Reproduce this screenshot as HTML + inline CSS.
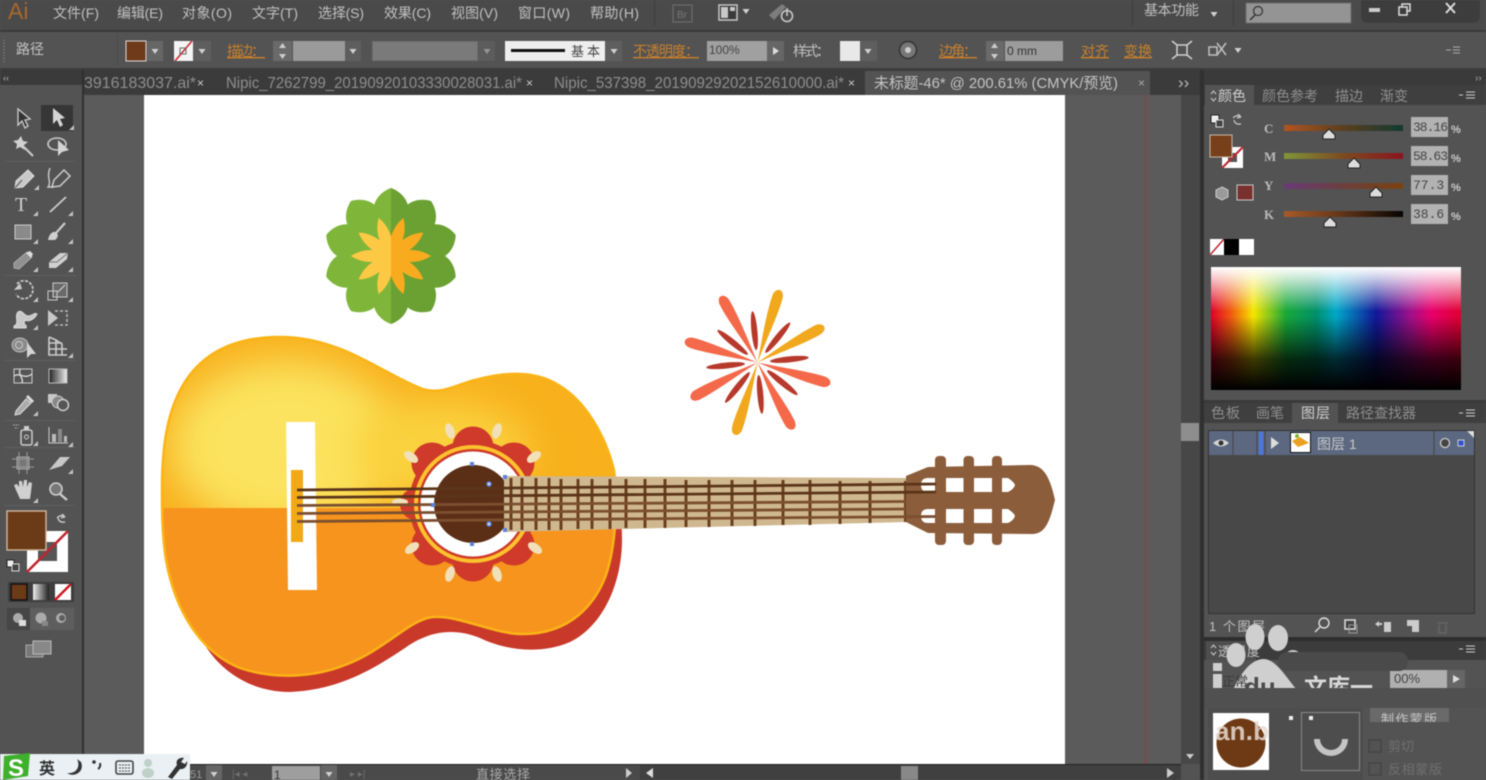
<!DOCTYPE html>
<html><head><meta charset="utf-8"><title>Illustrator</title>
<style>
html,body{margin:0;padding:0;background:#535353;width:1486px;height:780px;overflow:hidden}
svg{display:block;filter:blur(.5px)}
text{font-family:"Liberation Sans","Noto Sans CJK SC",sans-serif;fill:#bcbcbc}
.m{font-size:14px;fill:#c0c0c0}
.o{font-size:14px;fill:#c8802c;text-decoration:underline}
.t{font-size:14px;fill:#b4b4b4}
.p{font-size:14px;fill:#8e8e8e}
.q{font-size:16px;fill:#8e8e8e}
.i{stroke:#cdcdcd;stroke-width:1.5;fill:none}
.f{fill:#cdcdcd}
</style></head><body>
<svg xmlns="http://www.w3.org/2000/svg" width="1486" height="780" viewBox="0 0 1486 780">
<defs>
<filter id="b30" x="-60%" y="-60%" width="220%" height="220%"><feGaussianBlur stdDeviation="20"/></filter>
<clipPath id="bodyc"><path d="M162,490 C162,430 170,337 280,337 C340,337 380,372 420,388 C440,396 455,385 475,380 C500,373 530,370 553,382 C585,398 605,435 614,470 C618,500 616,545 606,575 C595,605 570,633 525,634 C495,635 460,615 433,617 C410,619 385,650 345,665 C315,677 275,680 240,668 C200,652 175,610 166,560 C162,535 162,510 162,490 Z"/></clipPath>
<clipPath id="art"><rect x="144" y="95" width="921" height="669"/></clipPath>
<clipPath id="fl"><rect x="320" y="180" width="71" height="150"/></clipPath>
<clipPath id="fr"><rect x="391" y="180" width="71" height="150"/></clipPath>
<clipPath id="hole"><rect x="420" y="460" width="84" height="90"/></clipPath>
<clipPath id="wm"><rect x="1200" y="620" width="290" height="68"/></clipPath>
<clipPath id="btn"><rect x="1370" y="708" width="80" height="14"/></clipPath>
<clipPath id="smile"><rect x="1310" y="733" width="50" height="30"/></clipPath>
<linearGradient id="hue" x1="0" x2="1" y1="0" y2="0">
<stop offset="0" stop-color="#e0002a"/><stop offset=".08" stop-color="#f05a10"/><stop offset=".17" stop-color="#f5e600"/><stop offset=".3" stop-color="#18a838"/><stop offset=".42" stop-color="#00906a"/><stop offset=".5" stop-color="#00a8c8"/><stop offset=".66" stop-color="#10189a"/><stop offset=".8" stop-color="#a0108a"/><stop offset=".88" stop-color="#e8006c"/><stop offset="1" stop-color="#e00030"/>
</linearGradient>
<linearGradient id="vw" x1="0" x2="0" y1="0" y2="1">
<stop offset="0" stop-color="#fff"/><stop offset=".08" stop-color="#fff" stop-opacity=".8"/><stop offset=".36" stop-color="#fff" stop-opacity="0"/><stop offset=".4" stop-color="#000" stop-opacity="0"/><stop offset=".75" stop-color="#000" stop-opacity=".75"/><stop offset="1" stop-color="#000"/>
</linearGradient>
<linearGradient id="c1" x1="0" x2="1" y1="0" y2="0"><stop offset="0" stop-color="#b5541f"/><stop offset=".5" stop-color="#5a3f1e"/><stop offset="1" stop-color="#123a30"/></linearGradient>
<linearGradient id="c2" x1="0" x2="1" y1="0" y2="0"><stop offset="0" stop-color="#82963a"/><stop offset=".5" stop-color="#7c4a1e"/><stop offset="1" stop-color="#8c1420"/></linearGradient>
<linearGradient id="c3" x1="0" x2="1" y1="0" y2="0"><stop offset="0" stop-color="#6a3a78"/><stop offset=".5" stop-color="#6c3f3c"/><stop offset="1" stop-color="#7a4210"/></linearGradient>
<linearGradient id="c4" x1="0" x2="1" y1="0" y2="0"><stop offset="0" stop-color="#a85a28"/><stop offset=".5" stop-color="#603418"/><stop offset="1" stop-color="#060402"/></linearGradient>
<linearGradient id="gt" x1="0" x2="1" y1="0" y2="0"><stop offset="0" stop-color="#222"/><stop offset="1" stop-color="#eee"/></linearGradient>
<path id="lp" d="M0,0 C-10,-15 -20,-35 -17,-50 C-15,-60 -6,-66 0,-68 C6,-66 15,-60 17,-50 C20,-35 10,-15 0,0 Z"/>
<path id="sp" d="M0,0 C-8,-12 -8,-28 0,-40 C8,-28 8,-12 0,0 Z"/>
<path id="big" d="M0,0 C-2,-25 -6,-52 -5.500,-68 C-5,-78 3,-78 5,-70 C6,-52 2.500,-25 0,0 Z"/>
<ellipse id="sm" cx="0" cy="-32" rx="3" ry="19.5"/>
<ellipse id="drop" cx="0" cy="0" rx="4.500" ry="8"/>
<path id="tri" d="M0,0 L5,0 L5,-5 Z" fill="#c4c4c4"/>
<path id="dn" d="M-3.5,-2 L3.5,-2 L0,3 Z" fill="#d0d0d0"/>
<path id="thumb" d="M-6,5 L-6,1 L0,-5 L6,1 L6,5 Z" fill="#ddd" stroke="#222" stroke-width="1"/>
</defs>

<rect width="1486" height="780" fill="#535353"/>
<!-- top menu -->
<rect width="1486" height="30" fill="#4a4a4a"/>
<rect y="30" width="1486" height="2" fill="#3a3a3a"/>
<text x="8" y="19" style="font-size:23px;fill:#a9682e">Ai</text>
<text class="m" x="53" y="18" textLength="46">文件(F)</text>
<text class="m" x="117" y="18" textLength="46">编辑(E)</text>
<text class="m" x="182" y="18" textLength="50">对象(O)</text>
<text class="m" x="252" y="18" textLength="46">文字(T)</text>
<text class="m" x="318" y="18" textLength="46">选择(S)</text>
<text class="m" x="384" y="18" textLength="47">效果(C)</text>
<text class="m" x="451" y="18" textLength="47">视图(V)</text>
<text class="m" x="518" y="18" textLength="52">窗口(W)</text>
<text class="m" x="590" y="18" textLength="49">帮助(H)</text>
<rect x="654" y="0" width="1" height="26" fill="#3c3c3c"/>
<rect x="673" y="5" width="19" height="17" fill="none" stroke="#707070"/>
<text x="677" y="18" style="font-size:10px;fill:#777">Br</text>
<rect x="719" y="5" width="18" height="15" fill="#3a3a3a" stroke="#c8c8c8" stroke-width="1.5"/>
<rect x="721" y="7" width="7" height="11" fill="#c8c8c8"/><rect x="730" y="7" width="5" height="4" fill="#c8c8c8"/>
<use href="#dn" x="746" y="11"/>
<path d="M769,15 L782,4 L786,7 L774,20 Z" fill="#7c7c7c"/>
<circle cx="787" cy="16" r="5.5" fill="none" stroke="#c8c8c8" stroke-width="1.6"/><path d="M787,8 v8" stroke="#c8c8c8" stroke-width="1.6"/>
<rect x="1132" y="0" width="1" height="26" fill="#3c3c3c"/>
<text class="m" x="1144" y="15" textLength="55">基本功能</text>
<use href="#dn" x="1214" y="14"/>
<rect x="1233" y="0" width="1" height="26" fill="#3c3c3c"/>
<rect x="1246" y="3" width="105" height="20" fill="#949494" stroke="#6a6a6a"/>
<circle cx="1258" cy="11" r="4.5" fill="none" stroke="#333" stroke-width="1.2"/><path d="M1255,15 L1250,20" stroke="#333" stroke-width="1.5"/>
<path d="M1361,0 H1480 V15 q0,8 -7,8 H1368 q-7,0 -7,-8 Z" fill="#3d3d3d"/>
<rect x="1369" y="8" width="11" height="4" fill="#ccc"/>
<rect x="1402" y="4" width="8" height="7" fill="none" stroke="#ddd" stroke-width="1.5"/><rect x="1399" y="7" width="8" height="8" fill="#3d3d3d" stroke="#ddd" stroke-width="1.5"/>
<path d="M1446,3 L1455,13 M1455,3 L1446,13" stroke="#ddd" stroke-width="2"/>

<!-- control bar -->
<rect y="32" width="1486" height="37" fill="#535353"/>
<rect y="68" width="1486" height="2" fill="#3c3c3c"/>
<path d="M4,40 v22" stroke="#888" stroke-width="1.5" stroke-dasharray="1 2"/>
<text x="16" y="54" style="font-size:14px;fill:#c4c4c4">路径</text>
<rect x="117" y="34" width="1" height="32" fill="#4a4a4a"/>
<rect x="126" y="41" width="20" height="20" fill="#6e3a1a" stroke="#ddd"/>
<rect x="147" y="41" width="16" height="20" fill="#666"/><use href="#dn" x="155" y="51"/>
<rect x="174" y="41" width="19" height="20" fill="#f4f4f4"/><path d="M175,61 L192,41" stroke="#d02a30" stroke-width="1.6"/><rect x="180" y="48" width="6" height="6" fill="none" stroke="#666"/>
<rect x="193" y="41" width="18" height="20" fill="#5e5e5e"/><use href="#dn" x="202" y="51"/>
<text class="o" x="227" y="56" textLength="38">描边：</text>
<rect x="273" y="41" width="19" height="20" fill="#6a6a6a"/><path d="M279,48 L286,48 L282.500,43 Z M279,54 L286,54 L282.500,59 Z" fill="#ccc"/>
<rect x="293" y="41" width="52" height="20" fill="#9a9a9a"/>
<rect x="345" y="41" width="16" height="20" fill="#5e5e5e"/><use href="#dn" x="353" y="51"/>
<rect x="372" y="41" width="106" height="20" fill="#7a7a7a" stroke="#5c5c5c"/>
<rect x="478" y="41" width="17" height="20" fill="#5c5c5c"/><use href="#dn" x="487" y="51" opacity=".5"/>
<rect x="505" y="41" width="100" height="20" fill="#eeeeee"/>
<rect x="511" y="49" width="54" height="3" fill="#111"/>
<text x="571" y="56" style="font-size:13px;fill:#444" textLength="29">基本</text>
<rect x="605" y="41" width="17" height="20" fill="#5e5e5e"/><use href="#dn" x="614" y="51"/>
<text class="o" x="633" y="56" textLength="66">不透明度：</text>
<rect x="707" y="41" width="60" height="20" fill="#a0a0a0"/>
<text x="709" y="54" style="font-size:12px;fill:#444">100%</text>
<rect x="767" y="41" width="17" height="20" fill="#666"/><path d="M773,47 L773,55 L779,51 Z" fill="#ddd"/>
<text x="793" y="56" style="font-size:14px;fill:#c4c4c4" textLength="37">样式：</text>
<rect x="840" y="41" width="20" height="20" fill="#e8e8e8"/>
<rect x="860" y="41" width="17" height="20" fill="#5e5e5e"/><use href="#dn" x="868" y="51"/>
<circle cx="908" cy="50" r="8.500" fill="#777" stroke="#333" stroke-width="1.500"/><circle cx="908" cy="50" r="3" fill="#ccc"/>
<text class="o" x="939" y="56" textLength="38">边角：</text>
<rect x="986" y="41" width="18" height="20" fill="#6a6a6a"/><path d="M991,48 L998,48 L994.500,43 Z M991,54 L998,54 L994.500,59 Z" fill="#ccc"/>
<rect x="1005" y="41" width="58" height="20" fill="#9c9c9c"/>
<text x="1007" y="55" style="font-size:12px;fill:#333" textLength="30">0 mm</text>
<text class="o" x="1081" y="56" textLength="28">对齐</text>
<text class="o" x="1124" y="56" textLength="28">变换</text>
<g stroke="#d0d0d0" stroke-width="1.500" fill="none"><rect x="1177" y="45" width="10" height="10"/><path d="M1172,41 L1177,45 M1192,41 L1187,45 M1172,59 L1177,55 M1192,59 L1187,55"/></g>
<g stroke="#c0c0c0" stroke-width="1.500" fill="none"><rect x="1209" y="47" width="8" height="8"/><path d="M1217,43 L1226,55 M1226,43 L1217,55"/></g>
<use href="#dn" x="1238" y="50"/>
<path d="M1446,50 h5 M1453,47 h7 M1453,50 h7 M1453,53 h7" stroke="#aaa"/>

<!-- tabs -->
<rect x="84" y="70" width="1116" height="25" fill="#3b3b3b"/>
<rect x="0" y="70" width="82" height="15" fill="#3a3a3a"/>
<text x="3" y="81" style="font-size:9px;fill:#bbb">‹‹</text>
<text class="q" x="84" y="88" textLength="112" lengthAdjust="spacingAndGlyphs">3916183037.ai*</text>
<text x="197" y="87" style="font-size:12px;fill:#ccc">×</text>
<text class="q" x="226" y="88" textLength="296" lengthAdjust="spacingAndGlyphs">Nipic_7262799_20190920103330028031.ai*</text>
<text x="526" y="87" style="font-size:12px;fill:#ccc">×</text>
<text class="q" x="554" y="88" textLength="290" lengthAdjust="spacingAndGlyphs">Nipic_537398_20190929202152610000.ai*</text>
<text x="848" y="87" style="font-size:12px;fill:#ccc">×</text>
<rect x="865" y="71" width="285" height="24" fill="#535353"/>
<text x="874" y="88" style="font-size:15px;fill:#c4c4c4" textLength="244" lengthAdjust="spacingAndGlyphs">未标题-46* @ 200.61% (CMYK/预览)</text>
<text x="1138" y="87" style="font-size:12px;fill:#aaa">×</text>
<text x="1178" y="88" style="font-size:17px;fill:#bbb">››</text>

<!-- canvas -->
<rect x="84" y="95" width="1097" height="670" fill="#5b5b5b"/>
<rect x="144" y="95" width="921" height="669" fill="#fff"/>
<rect x="1145" y="95" width="1" height="670" fill="#a8323a"/>
<rect x="82" y="70" width="2" height="710" fill="#303030"/>
<rect x="1181" y="95" width="19" height="670" fill="#474747"/>
<rect x="1181" y="423" width="18" height="18" fill="#8e8e8e"/>
<path d="M1186,754 h8 l-4,5 Z" fill="#ccc"/>
<rect x="1200" y="70" width="4" height="710" fill="#303030"/>

<!-- GUITAR -->
<g clip-path="url(#art)">
<path d="M600,445 C612,460 622,500 622,540 C622,580 605,625 570,642 C540,655 505,650 480,638 C455,628 430,630 405,648 C375,668 340,690 290,692 C250,692 220,670 205,645 Z" fill="#c9392a"/>
<g clip-path="url(#bodyc)">
<rect x="155" y="330" width="470" height="350" fill="#f8b01c"/>
<ellipse cx="285" cy="445" rx="115" ry="85" fill="#fbe35f" filter="url(#b30)"/>
<ellipse cx="440" cy="450" rx="90" ry="50" fill="#fad23e" filter="url(#b30)"/>
<rect x="155" y="508" width="470" height="180" fill="#f7941d"/>
</g>
<path d="M162,490 C162,430 170,337 280,337 C340,337 380,372 420,388 C440,396 455,385 475,380 C500,373 530,370 553,382 C585,398 605,435 614,470 C618,500 616,545 606,575 C595,605 570,633 525,634 C495,635 460,615 433,617 C410,619 385,650 345,665 C315,677 275,680 240,668 C200,652 175,610 166,560 C162,535 162,510 162,490 Z" fill="none" stroke="#fbb416" stroke-width="2.500"/>
<!-- bridge -->
<path d="M286,422 L315,422 L317,590 L288,590 Z" fill="#fff"/>
<rect x="291" y="470" width="12" height="72" fill="#f3a917"/>
<!-- rosette -->
<g fill="#cf3a2a" transform="translate(473,504)">
<circle cx="0" cy="0" r="64"/>
<circle cx="0" cy="-57" r="20.500"/><circle cx="41" cy="-41" r="20.500"/><circle cx="57" cy="0" r="20"/><circle cx="41" cy="41" r="20.500"/><circle cx="0" cy="57" r="20.500"/><circle cx="-41" cy="41" r="20.500"/><circle cx="-57" cy="0" r="16"/><circle cx="-41" cy="-41" r="20.500"/>
</g>
<g fill="#f1e0b8">
<use href="#drop" transform="translate(497,431) rotate(18)"/><use href="#drop" transform="translate(534,457) rotate(55)"/>
<use href="#drop" transform="translate(535,548) rotate(125)"/><use href="#drop" transform="translate(497,574) rotate(162)"/>
<use href="#drop" transform="translate(450,574) rotate(198)"/><use href="#drop" transform="translate(412,548) rotate(235)"/>
<use href="#drop" transform="translate(411,457) rotate(305)"/><use href="#drop" transform="translate(450,431) rotate(342)"/>
<ellipse cx="400" cy="502" rx="8" ry="3.500"/>
</g>
<circle cx="473" cy="504" r="59" fill="#fcc32d"/>
<circle cx="473" cy="504" r="55" fill="#cf3a2a"/>
<circle cx="473" cy="504" r="52.500" fill="#fff"/>
<circle cx="473" cy="504" r="39" fill="#5a2f16" clip-path="url(#hole)"/>
<!-- neck -->
<path d="M504,476 L906,478 L906,522 L504,532 Z" fill="#cfb88f"/>
<!-- head -->
<path d="M906,476 L928,467 L1030,465 C1044,465 1050,478 1055,500 C1050,520 1046,534 1032,534 L928,533 L906,522 Z" fill="#8b5d3b"/>
<g fill="#fff">
<path d="M928,478 H936 V492 H928 Q921,492 921,485 Q921,478 928,478 Z"/><rect x="946" y="478" width="18" height="14"/><rect x="973.500" y="478" width="18.500" height="14"/><path d="M1002,478 H1008 Q1014,482 1015,485 Q1014,489 1008,492 H1002 Z"/>
<path d="M928,509 H936 V523 H928 Q921,523 921,516 Q921,509 928,509 Z"/><rect x="946" y="509" width="18" height="14"/><rect x="973.500" y="509" width="18.500" height="14"/><path d="M1002,509 H1008 Q1014,513 1015,516 Q1014,520 1008,523 H1002 Z"/>
</g>
<g fill="#8b5d3b"><rect x="935" y="456" width="11" height="89" rx="4"/><rect x="963.500" y="456" width="10.500" height="89" rx="4"/><rect x="992" y="456" width="10" height="89" rx="4"/></g>
<!-- frets -->
<g stroke="#6b3f22" stroke-width="3">
<path d="M511,478 V530 M522,478 V530 M536,478 V530 M549,478 V530 M561,479 V530 M578,479 V529 M592,479 V529 M610,479 V529 M626,479 V528 M645,479 V528 M665,479 V528 M686,480 V527 M709,480 V527 M732,480 V526 M755,480 V526 M783,480 V525 M810,480 V525 M840,481 V524 M870,481 V523"/>
</g>
<path d="M905,481 V522" stroke="#6b3f22" stroke-width="2"/>
<!-- strings -->
<g fill="none" stroke-width="2.800">
<path d="M297,490 L936,484" stroke="#5b3519"/>
<path d="M297,497.500 L936,492" stroke="#5b3519"/>
<path d="M297,505.500 L906,501.500" stroke="#7b4f2f"/>
<path d="M297,513.500 L906,509" stroke="#7b4f2f"/>
<path d="M297,521.500 L936,516.500" stroke="#7b4f2f"/>
</g>
<!-- anchors -->
<g fill="#5d82dc"><rect x="470" y="462" width="4" height="4"/><rect x="470" y="542" width="4" height="4"/><rect x="431" y="503" width="4" height="4"/><rect x="503" y="475" width="4" height="4"/><rect x="503" y="528" width="4" height="4"/></g>
<g fill="#dfe4ef" stroke="#5d82dc" stroke-width="1.500"><circle cx="489" cy="484" r="2"/><circle cx="489" cy="524" r="2"/></g>

<!-- green flower -->
<g clip-path="url(#fl)"><g fill="#7fb63a" transform="translate(391,256)">
<use href="#lp"/><use href="#lp" transform="rotate(36)"/><use href="#lp" transform="rotate(72)"/><use href="#lp" transform="rotate(108)"/><use href="#lp" transform="rotate(144)"/><use href="#lp" transform="rotate(180)"/><use href="#lp" transform="rotate(216)"/><use href="#lp" transform="rotate(252)"/><use href="#lp" transform="rotate(288)"/><use href="#lp" transform="rotate(324)"/></g>
<g fill="#fdc945" transform="translate(391,256)"><circle r="9"/><use href="#sp" transform="rotate(18)"/><use href="#sp" transform="rotate(54)"/><use href="#sp" transform="rotate(90)"/><use href="#sp" transform="rotate(126)"/><use href="#sp" transform="rotate(162)"/><use href="#sp" transform="rotate(198)"/><use href="#sp" transform="rotate(234)"/><use href="#sp" transform="rotate(270)"/><use href="#sp" transform="rotate(306)"/><use href="#sp" transform="rotate(342)"/></g></g>
<g clip-path="url(#fr)"><g fill="#6ba032" transform="translate(391,256)">
<use href="#lp"/><use href="#lp" transform="rotate(36)"/><use href="#lp" transform="rotate(72)"/><use href="#lp" transform="rotate(108)"/><use href="#lp" transform="rotate(144)"/><use href="#lp" transform="rotate(180)"/><use href="#lp" transform="rotate(216)"/><use href="#lp" transform="rotate(252)"/><use href="#lp" transform="rotate(288)"/><use href="#lp" transform="rotate(324)"/></g>
<g fill="#f9ab1f" transform="translate(391,256)"><circle r="9"/><use href="#sp" transform="rotate(18)"/><use href="#sp" transform="rotate(54)"/><use href="#sp" transform="rotate(90)"/><use href="#sp" transform="rotate(126)"/><use href="#sp" transform="rotate(162)"/><use href="#sp" transform="rotate(198)"/><use href="#sp" transform="rotate(234)"/><use href="#sp" transform="rotate(270)"/><use href="#sp" transform="rotate(306)"/><use href="#sp" transform="rotate(342)"/></g></g>

<!-- burst -->
<g transform="translate(757.500,362.500)">
<g fill="#f4694a"><use href="#big" transform="rotate(-28.600)"/><use href="#big" transform="rotate(-73.200)"/><use href="#big" transform="rotate(-118.100)"/><use href="#big" transform="rotate(152)"/><use href="#big" transform="rotate(106.400)"/></g>
<g fill="#f2a81d"><use href="#big" transform="rotate(16.800) scale(-1,1)"/><use href="#big" transform="rotate(61.400) scale(-1,1)"/><use href="#big" transform="rotate(197) scale(-1,1)"/></g>
<g fill="#b7392c"><use href="#sm" transform="rotate(-5.600)"/><use href="#sm" transform="rotate(39.200)"/><use href="#sm" transform="rotate(84.400)"/><use href="#sm" transform="rotate(129)"/><use href="#sm" transform="rotate(175)"/><use href="#sm" transform="rotate(218.800)"/><use href="#sm" transform="rotate(264.400)"/><use href="#sm" transform="rotate(309)"/></g>
</g>
</g>

<!-- LEFT TOOLS -->
<rect x="41" y="105" width="32" height="26" fill="#363636"/>
<rect x="4" y="161" width="72" height="1" fill="#5f5f5f"/><rect x="4" y="275" width="72" height="1" fill="#5f5f5f"/><rect x="4" y="360" width="72" height="1" fill="#5f5f5f"/><rect x="4" y="420" width="72" height="1" fill="#5f5f5f"/><rect x="4" y="447" width="72" height="1" fill="#5f5f5f"/><rect x="4" y="505" width="72" height="1" fill="#5f5f5f"/>
<!-- selection -->
<path d="M18,109 L18,125 L22,121 L25,128 L28,126 L25,120 L30,119 Z" fill="#333" stroke="#c8c8c8" stroke-width="1.400"/>
<path d="M53,108 L53,124 L57,120 L60,127 L63,125 L60,119 L65,118 Z" fill="#d4d4d4"/>
<use href="#tri" x="69" y="130"/>
<!-- wand, lasso -->
<path d="M21,136 l2,5 5,1 -4,3 1,5 -5,-3 -4,2 1,-5 -4,-3 5,-1 Z" fill="#d0d0d0"/><path d="M24,147 L33,156" stroke="#ccc" stroke-width="2"/>
<ellipse cx="57" cy="144" rx="9" ry="6" fill="none" stroke="#ccc" stroke-width="1.600"/><path d="M58,140 L58,156 L62,152 L69,150 Z" fill="#d4d4d4"/>
<!-- pen -->
<path d="M16,181 L28,170 L34,176 L23,187 L15,188 Z" fill="#c8c8c8" stroke="#ddd"/><path d="M15,188 L22,180" stroke="#555"/><use href="#tri" x="34" y="190"/>
<path d="M54,180 L64,170 L70,176 L60,186 L52,187 Z" fill="none" stroke="#ccc" stroke-width="1.500"/><path d="M50,168 C46,178 52,182 48,187 L54,187" fill="none" stroke="#ccc" stroke-width="1.400"/>
<!-- T line -->
<text x="15" y="211" style="font-family:'Liberation Serif',serif;font-size:20px;fill:#cfcfcf">T</text><use href="#tri" x="33" y="216"/>
<path d="M50,212 L66,197" stroke="#ccc" stroke-width="1.800"/><use href="#tri" x="68" y="216"/>
<!-- rect brush -->
<rect x="15" y="225" width="16" height="14" fill="#8a8a8a" stroke="#ccc"/><use href="#tri" x="33" y="244"/>
<path d="M65,223 L56,233" stroke="#ccc" stroke-width="2.200"/><path d="M48,240 Q50,231 56,232 Q60,236 55,240 Z" fill="#d0d0d0"/><use href="#tri" x="68" y="244"/>
<!-- pencil eraser -->
<path d="M14,268 L14,263 L27,252 L32,257 L19,269 Z" fill="#909090" stroke="#aaa"/><path d="M26,253 L31,258 L33,254 L30,251 Z" fill="#ddd"/><use href="#tri" x="33" y="272"/>
<path d="M49,262 L60,253 L68,253 L67,259 L56,268 L49,268 Z" fill="#d0d0d0"/><path d="M49,262 L57,262 L68,253" stroke="#777" fill="none"/><use href="#tri" x="68" y="272"/>
<!-- rotate scale -->
<path d="M17,284 a9,9 0 1 1 -1,10" fill="none" stroke="#c8c8c8" stroke-width="1.800" stroke-dasharray="3 1.500"/><path d="M14,290 l6,-7 2,6 Z" fill="#ccc"/><use href="#tri" x="33" y="302"/>
<rect x="53" y="283" width="14" height="14" fill="#6a6a6a" stroke="#ccc"/><rect x="48" y="291" width="9" height="9" fill="none" stroke="#ccc"/><path d="M58,292 L65,285" stroke="#ddd"/><use href="#tri" x="68" y="302"/>
<!-- warp free -->
<path d="M14,326 C20,324 14,316 18,312 C22,309 24,316 28,316 C33,316 34,312 37,314 C34,320 28,322 25,320 C22,326 28,324 26,328 L14,328 Z" fill="#c8c8c8" stroke="#ddd"/><use href="#tri" x="33" y="330"/>
<path d="M48,310 L48,326 L58,318 Z" fill="#c8c8c8"/><path d="M55,311 H67 V325 H55" fill="none" stroke="#bbb" stroke-width="1.500" stroke-dasharray="3 2"/>
<!-- shape builder, grid -->
<ellipse cx="20" cy="345" rx="8" ry="7" fill="#8a8a8a" stroke="#bbb"/><circle cx="19" cy="345" r="3.500" fill="none" stroke="#ccc"/><path d="M27,342 L27,358 L31,354 L36,354 Z" fill="#d4d4d4"/>
<path d="M49,337 V355 H67 M49,337 L56,340 V355 M49,343 H62 M49,349 H67 M56,340 L62,344 V355" fill="none" stroke="#ccc" stroke-width="1.600"/><use href="#tri" x="68" y="358"/>
<!-- mesh gradient -->
<rect x="14" y="369" width="18" height="14" fill="#555" stroke="#ccc"/><path d="M14,376 C20,372 24,380 32,374 M20,369 C18,376 24,378 22,383" fill="none" stroke="#ddd" stroke-width="1.300"/>
<rect x="49" y="369" width="18" height="14" fill="url(#gt)" stroke="#bbb"/>
<!-- eyedropper blend -->
<path d="M16,411 L26,399 L31,403 L20,414 L15,415 Z" fill="#aaa" stroke="#ddd"/><path d="M27,396 L33,402" stroke="#ddd" stroke-width="3"/><use href="#tri" x="33" y="416"/>
<rect x="48" y="394" width="9" height="9" fill="#c8c8c8"/><circle cx="58" cy="402" r="6" fill="#888" stroke="#ccc"/><circle cx="63" cy="405" r="5.500" fill="#555" stroke="#ccc" stroke-width="1.500"/>
<!-- sprayer graph -->
<rect x="21" y="430" width="11" height="15" rx="2" fill="none" stroke="#ccc" stroke-width="1.500"/><circle cx="26.500" cy="437" r="2" fill="none" stroke="#ccc"/><rect x="24" y="426" width="5" height="4" fill="#ccc"/><path d="M13,425 h6 M15,428 h3" stroke="#bbb" stroke-dasharray="1.500 1"/><use href="#tri" x="33" y="446"/>
<path d="M49,427 V443 H68" fill="none" stroke="#ccc"/><rect x="52" y="434" width="4" height="8" fill="#bbb"/><rect x="58" y="429" width="4" height="13" fill="#888"/><rect x="64" y="436" width="3" height="6" fill="#bbb"/><use href="#tri" x="68" y="447"/>
<!-- artboard slice -->
<rect x="17" y="457" width="12" height="12" fill="#777" stroke="#aaa"/><path d="M12,459 H34 M12,467 H34 M19,452 V474 M27,452 V474" stroke="#999"/>
<path d="M49,470 L60,457 L70,457 L62,466 Z" fill="#c8c8c8"/><use href="#tri" x="68" y="474"/>
<!-- hand zoom -->
<path d="M16,490 L14,485 L17,484 L19,487 L19,481 L22,481 L23,487 L24,480 L27,480 L27,487 L29,482 L32,483 L31,492 L30,499 L20,499 Z" fill="#d0d0d0"/><use href="#tri" x="33" y="503"/>
<circle cx="56" cy="489" r="6" fill="#777" stroke="#ccc" stroke-width="1.600"/><path d="M60,494 L67,500" stroke="#ccc" stroke-width="2.400"/>
<!-- color -->
<path d="M57,518 q4,-4 8,-1 M65,517 l-3,-3 M65,517 l-4,1 M58,518 q1,5 7,4" stroke="#ccc" fill="none" stroke-width="1.400"/>
<rect x="27" y="531" width="41" height="41" fill="#fff"/><rect x="38" y="542" width="19" height="19" fill="#565656"/>
<path d="M27,572 L68,531" stroke="#c0242e" stroke-width="2.600"/>
<rect x="7" y="511" width="39" height="39" fill="#6b3a16" stroke="#cfb8a0" stroke-width="1.400"/>
<rect x="7" y="560" width="7" height="7" fill="#eee" stroke="#222"/><rect x="12" y="564" width="7" height="7" fill="#444" stroke="#ddd"/>
<rect x="8" y="582" width="66" height="20" fill="#3e3e3e"/>
<rect x="11" y="584" width="16" height="16" fill="#6b3a16" stroke="#111" stroke-width="1.500"/>
<rect x="33" y="584" width="16" height="16" fill="url(#gt)" transform="rotate(180 41 592)"/>
<rect x="55" y="584" width="16" height="16" fill="#fff"/><path d="M55,600 L71,584" stroke="#d01820" stroke-width="2.500"/>
<rect x="7" y="608" width="67" height="22" fill="#5e5e5e"/><rect x="7" y="608" width="23" height="22" fill="#464646"/>
<g fill="#aaa"><circle cx="18" cy="618" r="5"/><circle cx="41" cy="618" r="5.500"/><circle cx="61" cy="618" r="5"/></g><rect x="19" y="620" width="7" height="6" fill="#ddd"/><rect x="42" y="621" width="6" height="5" fill="#888"/><circle cx="62" cy="618" r="3" fill="#5e5e5e"/>
<rect x="26" y="645" width="17" height="12" fill="#777" stroke="#aaa"/><rect x="33" y="641" width="18" height="13" fill="#888" stroke="#bbb"/>

<!-- RIGHT: color panel -->
<rect x="1204" y="70" width="282" height="15" fill="#3a3a3a"/>
<text x="1475" y="81" style="font-size:10px;fill:#aaa">››</text>
<rect x="1204" y="85" width="282" height="20" fill="#3f3f3f"/>
<rect x="1205" y="85" width="49" height="21" fill="#535353"/>
<path d="M1211,94 l2.500,-3 2.500,3 M1211,98 l2.500,3 2.500,-3" stroke="#ccc" fill="none"/>
<text x="1218" y="101" style="font-size:14px;fill:#d0d0d0">颜色</text>
<text class="p" x="1262" y="101" textLength="56">颜色参考</text>
<text class="p" x="1335" y="101" textLength="28">描边</text>
<text class="p" x="1380" y="101" textLength="28">渐变</text>
<path d="M1459,95 h4 M1466,92 h9 M1466,95 h9 M1466,98 h9" stroke="#ccc"/>
<rect x="1204" y="105" width="282" height="295" fill="#535353"/>
<rect x="1211" y="115" width="8" height="8" fill="#eee" stroke="#222"/><rect x="1216" y="120" width="7" height="7" fill="#444" stroke="#ddd"/>
<path d="M1233,118 q4,-4 8,-1 M1241,117 l-3,-3 M1241,117 l-4,1 M1234,120 q1,5 7,4" stroke="#ccc" fill="none" stroke-width="1.200"/>
<rect x="1222" y="147" width="21" height="21" fill="#fff"/><rect x="1228" y="153" width="9" height="9" fill="#555"/><path d="M1222,168 L1243,147" stroke="#c0242e" stroke-width="2"/>
<rect x="1210" y="135" width="22" height="22" fill="#77401a" stroke="#c8b8a8"/>
<path d="M1222,187 l6,3 v7 l-6,3 -6,-3 v-7 Z" fill="#9a9a9a" stroke="#ccc"/>
<rect x="1237" y="185" width="16" height="15" fill="#7b3030" stroke="#ccc"/>
<text x="1264" y="133" style="font-family:'Liberation Serif',serif;font-size:13px;font-weight:bold;fill:#bbb">C</text>
<text x="1264" y="161" style="font-family:'Liberation Serif',serif;font-size:13px;font-weight:bold;fill:#bbb">M</text>
<text x="1264" y="190" style="font-family:'Liberation Serif',serif;font-size:13px;font-weight:bold;fill:#bbb">Y</text>
<text x="1264" y="219" style="font-family:'Liberation Serif',serif;font-size:13px;font-weight:bold;fill:#bbb">K</text>
<rect x="1284" y="125" width="119" height="6" fill="url(#c1)"/>
<rect x="1284" y="153" width="119" height="6" fill="url(#c2)"/>
<rect x="1284" y="183" width="119" height="6" fill="url(#c3)"/>
<rect x="1284" y="211" width="119" height="6" fill="url(#c4)"/>
<use href="#thumb" x="1329" y="134"/><use href="#thumb" x="1354" y="163"/><use href="#thumb" x="1376" y="192"/><use href="#thumb" x="1330" y="222"/>
<rect x="1411" y="117" width="37" height="20" fill="#b2b2b2"/><rect x="1411" y="146" width="37" height="20" fill="#b2b2b2"/><rect x="1411" y="175" width="37" height="20" fill="#b2b2b2"/><rect x="1411" y="204" width="37" height="20" fill="#b2b2b2"/>
<text x="1413" y="131" style="font-family:'Liberation Mono',monospace;font-size:13px;fill:#444" textLength="35">38.16</text>
<text x="1413" y="160" style="font-family:'Liberation Mono',monospace;font-size:13px;fill:#444" textLength="35">58.63</text>
<text x="1413" y="189" style="font-family:'Liberation Mono',monospace;font-size:13px;fill:#444">77.3</text>
<text x="1413" y="218" style="font-family:'Liberation Mono',monospace;font-size:13px;fill:#444">38.6</text>
<text x="1451" y="133" style="font-size:11px;font-weight:bold;fill:#ccc">%</text><text x="1451" y="162" style="font-size:11px;font-weight:bold;fill:#ccc">%</text><text x="1451" y="191" style="font-size:11px;font-weight:bold;fill:#ccc">%</text><text x="1451" y="220" style="font-size:11px;font-weight:bold;fill:#ccc">%</text>
<rect x="1210" y="239" width="14" height="16" fill="#fff"/><path d="M1210,255 L1224,239" stroke="#c0242e" stroke-width="1.500"/>
<rect x="1224" y="239" width="15" height="16" fill="#000"/><rect x="1239" y="239" width="15" height="16" fill="#fff"/>
<rect x="1211" y="267" width="250" height="123" fill="url(#hue)"/>
<rect x="1211" y="267" width="250" height="123" fill="url(#vw)"/>

<!-- layers -->
<rect x="1204" y="400" width="282" height="5" fill="#3a3a3a"/>
<rect x="1204" y="403" width="282" height="20" fill="#3f3f3f"/>
<rect x="1292" y="403" width="46" height="21" fill="#535353"/>
<text class="p" x="1211" y="418" textLength="29">色板</text>
<text class="p" x="1256" y="418" textLength="28">画笔</text>
<text x="1301" y="418" style="font-size:14px;fill:#d0d0d0" textLength="29">图层</text>
<text class="p" x="1346" y="418" textLength="70">路径查找器</text>
<path d="M1459,413 h4 M1466,410 h9 M1466,413 h9 M1466,416 h9" stroke="#ccc"/>
<rect x="1204" y="423" width="282" height="217" fill="#535353"/>
<rect x="1208.500" y="430.500" width="266" height="183" fill="#484848" stroke="#333"/>
<rect x="1209" y="431" width="265" height="24" fill="#5b6880"/>
<path d="M1233,431 v24 M1257,431 v24 M1265,431 v24 M1434,431 v24" stroke="#444"/>
<path d="M1213,443 q8,-7 16,0 q-8,7 -16,0 Z" fill="#d4d4d4"/><circle cx="1221" cy="443" r="2.500" fill="#333"/>
<rect x="1259" y="432" width="4" height="23" fill="#4a78e0"/>
<path d="M1271,437 L1271,449 L1279,443 Z" fill="#ddd"/>
<rect x="1290.500" y="432.500" width="20" height="20" fill="#fff" stroke="#111"/>
<path d="M1292,441 L1300,437 L1309,443 L1298,447 Z" fill="#eaa020"/><circle cx="1297" cy="436" r="2" fill="#7fb63a"/>
<text x="1317" y="449" style="font-size:14px;fill:#c8c8c8">图层 1</text>
<circle cx="1445" cy="443" r="4.500" fill="#444" stroke="#ccc" stroke-width="1.300"/>
<rect x="1458" y="440" width="6" height="6" fill="#3050d0" stroke="#ccc"/>
<path d="M1467,431 L1474,431 L1474,438 Z" fill="#ddd"/>
<text x="1209" y="631" style="font-size:13px;fill:#c0c0c0" textLength="56">1 个图层</text>
<circle cx="1324" cy="623" r="5" fill="none" stroke="#ddd" stroke-width="1.400"/><path d="M1320,627 L1315,632" stroke="#ddd" stroke-width="1.400"/>
<rect x="1345" y="620" width="10" height="9" fill="#444" stroke="#ddd" stroke-width="1.500"/><rect x="1349" y="625" width="8" height="8" fill="none" stroke="#999"/>
<path d="M1375,624 l4,-3 v2 h3 v2 h-3 v2 Z" fill="#ccc"/><rect x="1384" y="622" width="7" height="10" fill="#ccc"/>
<path d="M1407,620 h12 v12 h-7 v-6 h-5 Z" fill="#ccc"/>
<path d="M1437,623 h11 M1439,625 v8 h7 v-8" stroke="#666" fill="none" stroke-width="1.500"/>
<!-- transparency panel -->
<rect x="1204" y="637" width="282" height="4" fill="#2e2e2e"/>
<rect x="1204" y="641" width="282" height="19" fill="#3c3c3c"/>
<rect x="1206" y="641" width="50" height="19" fill="#4e4e4e"/>
<path d="M1211,648 l2.500,-3 2.500,3 M1211,652 l2.500,3 2.500,-3" stroke="#ccc" fill="none"/>
<text x="1218" y="656" style="font-size:13px;fill:#c0c0c0" textLength="42">透明度</text>
<path d="M1459,649 h4 M1466,646 h9 M1466,649 h9 M1466,652 h9" stroke="#ccc"/>
<rect x="1204" y="660" width="282" height="120" fill="#535353"/>
<rect x="1390" y="670" width="57" height="18" fill="#b0b0b0"/>
<text x="1394" y="683" style="font-size:13px;fill:#444">00%</text>
<rect x="1447" y="670" width="18" height="18" fill="#666"/><path d="M1453,675 L1453,683 L1460,679 Z" fill="#ddd"/>
<!-- watermark -->
<g clip-path="url(#wm)">
<g fill="#cfcfcf"><ellipse cx="1255" cy="637" rx="9.500" ry="13"/><ellipse cx="1278" cy="638" rx="10" ry="13"/><ellipse cx="1236" cy="655" rx="9.500" ry="12"/><ellipse cx="1293" cy="660" rx="9" ry="10"/>
<path d="M1233,690 C1240,675 1250,659 1264,659 C1276,659 1288,680 1297,690 Z"/>
<rect x="1213" y="663" width="9" height="8"/><rect x="1213" y="674" width="9" height="16"/></g>
<rect x="1278" y="652" width="130" height="19" rx="9" fill="#4a4a4a"/>
<text x="1244" y="696" style="font-size:26px;font-weight:bold;fill:#4c4c4c">du</text>
<text x="1304" y="695" style="font-size:23px;font-weight:bold;fill:#d8d8d8">文库一</text>
</g>
<text x="1222" y="686" style="font-size:13px;fill:#3c3c3c">正常</text>
<rect x="1204" y="688" width="282" height="20" fill="#505050"/>
<!-- masks -->
<rect x="1208" y="708" width="155" height="72" fill="#4d4d4d"/>
<rect x="1213" y="713" width="56" height="57" fill="#fff"/>
<circle cx="1241" cy="743" r="24.500" fill="#6e3a16"/>
<text x="1215" y="740" style="font-size:26px;font-weight:bold;fill:#e8dcd2;opacity:.85" textLength="54">an.b</text>
<rect x="1301.500" y="712.500" width="58" height="58" fill="none" stroke="#888"/>
<rect x="1289" y="716" width="4" height="4" fill="#eee"/><rect x="1309" y="716" width="4" height="4" fill="#eee"/>
<g clip-path="url(#smile)"><path d="M1317,743 a14,14 0 0 0 28,0" transform="translate(0,-4)" fill="none" stroke="#c4c4c4" stroke-width="6"/></g>
<rect x="1370" y="708" width="79" height="14" fill="#6a6a6a"/>
<g clip-path="url(#btn)"><text x="1381" y="724" style="font-size:13px;fill:#c8c8c8" textLength="56">制作蒙版</text></g>
<rect x="1369" y="740" width="12" height="12" fill="none" stroke="#444" stroke-width="1.500"/>
<text x="1388" y="751" style="font-size:13px;fill:#707070">剪切</text>
<rect x="1369" y="763" width="12" height="12" fill="none" stroke="#444" stroke-width="1.500"/>
<text x="1388" y="774" style="font-size:13px;fill:#707070" textLength="54">反相蒙版</text>

<!-- status bar -->
<rect x="0" y="764" width="1181" height="16" fill="#4a4a4a"/>
<rect x="84" y="764" width="1097" height="1" fill="#222"/>
<text x="190" y="778" style="font-size:11px;fill:#999">51</text>
<rect x="206" y="765" width="16" height="15" fill="#666"/><use href="#dn" x="214" y="774"/>
<text x="232" y="777" style="font-size:10px;fill:#707070">|◂ ◂</text>
<rect x="272" y="766" width="48" height="14" fill="#9e9e9e"/><text x="274" y="779" style="font-size:12px;fill:#333">1</text>
<rect x="321" y="765" width="16" height="15" fill="#666"/><use href="#dn" x="329" y="774"/>
<text x="350" y="777" style="font-size:10px;fill:#707070">▸ ▸|</text>
<text x="476" y="779" style="font-size:13px;fill:#aaa" textLength="54">直接选择</text>
<path d="M626,768 L626,778 L632,773 Z" fill="#ccc"/>
<rect x="640" y="765" width="541" height="15" fill="#404040"/>
<path d="M653,768 L653,778 L646,773 Z" fill="#ddd"/>
<rect x="901" y="766" width="17" height="14" fill="#888"/>
<path d="M1167,768 L1167,778 L1174,773 Z" fill="#ccc"/>
<rect x="1181" y="764" width="19" height="16" fill="#535353"/>
<!-- IME -->
<rect x="0" y="754" width="190" height="26" fill="#eaf0f3"/>
<path d="M4,756 L30,753 L28,776 L3,780 Z" fill="#3fb02c"/>
<text x="8" y="776" style="font-size:24px;font-weight:bold;fill:#fff">S</text>
<text x="39" y="774" style="font-size:16px;font-weight:bold;fill:#333">英</text>
<path d="M77,759 C81,767 76,774 67,773 C74,778 85,772 81,762 Z" fill="#333"/>
<circle cx="94" cy="762" r="1.800" fill="#333"/><path d="M100,763 q1,4 -2,6" stroke="#333" stroke-width="2" fill="none"/>
<rect x="116" y="761" width="17" height="13" rx="2" fill="none" stroke="#444" stroke-width="1.600"/><path d="M119,765 h11 M119,768 h11 M119,771 h11" stroke="#444" stroke-dasharray="2 1"/>
<circle cx="148" cy="763" r="4" fill="#bfd0c8"/><ellipse cx="148" cy="773" rx="6" ry="5" fill="#bfd0c8"/>
<path d="M168,777 L177,765 C175,760 180,757 184,758 L181,762 L185,764 L187,761 C188,766 184,770 180,769 L172,779 Z" fill="#333"/>
</svg>
</body></html>
